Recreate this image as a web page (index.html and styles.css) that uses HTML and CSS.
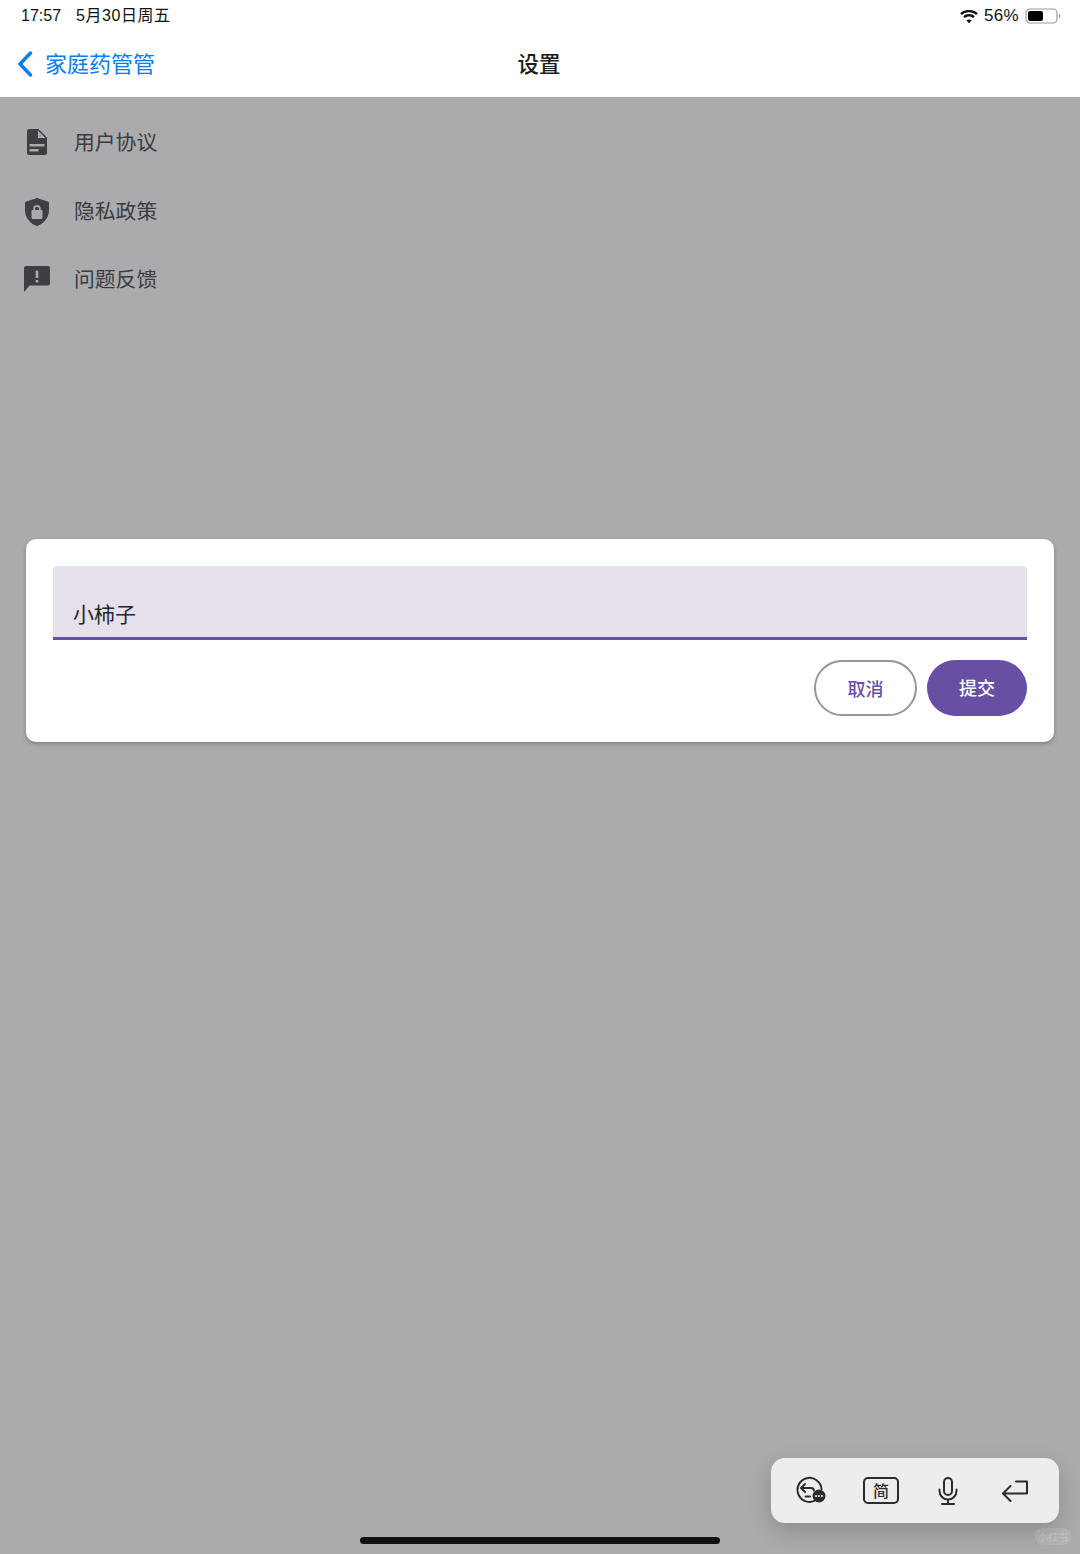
FILE: index.html
```html
<!DOCTYPE html>
<html lang="zh">
<head>
<meta charset="utf-8">
<title>设置</title>
<link rel="stylesheet" href="styles.css">
</head>
<body>
<div class="app">
  <header class="top">
    <div class="status">
      <div class="status-left"><span>17:57</span><span class="date">5月30日周五</span></div>
      <div class="status-right">
        <svg class="wifi" width="18" height="13" viewBox="0 0 18 13"><path d="M9 2.300c2.700 0 5.200 1 7.100 2.800l1.700-1.800C15.500 1.100 12.400-.1 9-.1S2.500 1.100.2 3.300l1.700 1.800C3.800 3.300 6.300 2.300 9 2.300zM9 6.400c1.600 0 3 .6 4.100 1.600l1.700-1.700C13.300 4.800 11.200 4 9 4s-4.300.8-5.800 2.300L4.900 8C6 7 7.400 6.400 9 6.400zM9 9.500c-1 0-1.900.4-2.600 1.100L9 13.200l2.600-2.600c-.7-.7-1.600-1.100-2.600-1.100z" fill="#111"/></svg>
        <span class="pct">56%</span>
        <svg class="battery" width="36" height="16" viewBox="0 0 36 16"><rect x="1" y="1" width="31" height="14" rx="4" fill="none" stroke="#9a9a9a" stroke-width="1.200"/><rect x="3" y="3" width="15" height="10" rx="2" fill="#000"/><path d="M34 6v4c1-.3 1.500-1.100 1.500-2S35 6.300 34 6z" fill="#9a9a9a"/></svg>
      </div>
    </div>
    <nav class="nav">
      <div class="back">
        <svg width="16" height="26" viewBox="0 0 16 26"><path d="M13.500 2 3 13l10.500 11" fill="none" stroke="#0a7cf0" stroke-width="3.400" stroke-linecap="round" stroke-linejoin="round"/></svg>
        <span class="lift">家庭药管管</span>
      </div>
      <h1 class="lift">设置</h1>
    </nav>
  </header>

  <main class="list">
    <div class="row">
      <svg class="icon" width="30" height="30" viewBox="0 0 30 30"><path d="M7 1h9.500L25 9.500V25a2 2 0 0 1-2 2H7a2 2 0 0 1-2-2V3a2 2 0 0 1 2-2z M16 2.500V10h7.500z M7.500 16v2.500h15V16z M7.500 21v2.500h9V21z" fill="#3e3e43" fill-rule="evenodd"/></svg>
      <span class="lift">用户协议</span>
    </div>
    <div class="row">
      <svg class="icon" width="30" height="30" viewBox="0 0 30 30"><path d="M15 1 3 5v8.500C3 20.500 8.200 26.800 15 29c6.800-2.200 12-8.500 12-15.500V5zM19.500 22h-9a1 1 0 0 1-1-1v-7a1 1 0 0 1 1-1h.8v-1.300a3.700 3.700 0 0 1 7.400 0V13h.8a1 1 0 0 1 1 1v7a1 1 0 0 1-1 1zM13 13h4v-1.300a2 2 0 0 0-4 0z" fill="#3e3e43" fill-rule="evenodd"/></svg>
      <span class="lift">隐私政策</span>
    </div>
    <div class="row">
      <svg class="icon" width="30" height="30" viewBox="0 0 30 30"><path d="M4 1h22a2 2 0 0 1 2 2v15.500a2 2 0 0 1-2 2H7.500L2 27V3a2 2 0 0 1 2-2zM13.700 5.500V13h2.600V5.500zM13.700 15v2.600h2.600V15z" fill="#3e3e43" fill-rule="evenodd"/></svg>
      <span class="lift">问题反馈</span>
    </div>
  </main>

  <section class="dialog">
    <div class="field"><span>小柿子</span></div>
    <div class="actions">
      <button class="btn btn-outline">取消</button>
      <button class="btn btn-solid">提交</button>
    </div>
  </section>

  <div class="kb">
    <svg width="34" height="32" viewBox="0 0 34 32"><g fill="none" stroke="#2b2b2b" stroke-width="2" stroke-linecap="round" stroke-linejoin="round"><path d="M22 25a12 12 0 1 1 5.500-11"/><path d="M11 9 7 13l4 4M7.500 13H17a3 3 0 0 1 3 2.500M11.500 21.500H16"/></g><circle cx="25" cy="21" r="6.500" fill="#2b2b2b"/><g fill="#eee"><circle cx="22" cy="21" r="1.100"/><circle cx="25" cy="21" r="1.100"/><circle cx="28" cy="21" r="1.100"/></g></svg>
    <div class="jian">简</div>
    <svg width="22" height="28" viewBox="0 0 22 28"><g fill="none" stroke="#2b2b2b" stroke-width="2" stroke-linecap="round"><rect x="7" y="1" width="8" height="17" rx="4"/><path d="M2.500 12.500v1.500a8.500 8.500 0 0 0 17 0v-1.500M11 22.500V27M5 27h12"/></g></svg>
    <svg width="28" height="24" viewBox="0 0 28 24"><path d="M15 2.500h11v12H2.500M9.500 7 2 14.500 9.500 22" fill="none" stroke="#2b2b2b" stroke-width="2" stroke-linecap="round" stroke-linejoin="round"/></svg>
  </div>
  <div class="home"></div>
  <div class="mark">小红书</div>
</div>
</body>
</html>
```

FILE: styles.css
```css
* { box-sizing: border-box; }
html, body { margin: 0; padding: 0; }
body {
  width: 1080px;
  height: 1554px;
  overflow: hidden;
  font-family: "Noto Sans CJK SC", "Noto Sans", sans-serif;
}
.app {
  position: relative;
  width: 1080px;
  height: 1554px;
  background: #ababad;
  display: flex;
  flex-direction: column;
}
.top {
  height: 97px;
  background: #fff;
  display: flex;
  flex-direction: column;
}
.status {
  height: 32px;
  padding: 0 19px 0 21px;
  display: flex;
  justify-content: space-between;
  align-items: center;
  font-family: "Liberation Sans", "Noto Sans CJK SC", sans-serif;
  font-size: 16px;
  line-height: 20px;
  color: #111;
}
.status-left { display: flex; align-items: baseline; gap: 15px; }
.date { letter-spacing: .55px; }
.status-right { display: flex; align-items: center; gap: 6px; }
.pct { font-size: 17px; letter-spacing: .3px; }
.nav {
  flex: 1;
  display: grid;
  grid-template-columns: 1fr auto 1fr;
  align-items: center;
  padding-bottom: 1px;
}
.lift { padding-bottom: 4px; }
.back {
  margin-left: 17px;
  display: flex;
  align-items: center;
  gap: 12px;
  color: #0a7cf0;
  font-size: 22px;
}
.nav h1 {
  margin: 0 2px 0 0;
  font-size: 21.500px;
  font-weight: 500;
  color: #1c1c1c;
}
.list {
  padding: 12px 0 0 22px;
  display: flex;
  flex-direction: column;
}
.row {
  height: 68.500px;
  display: flex;
  align-items: center;
  gap: 22px;
  font-size: 20.800px;
  color: #3c3c40;
}
.icon { flex: none; }
.dialog {
  position: absolute;
  left: 26px;
  top: 539px;
  width: 1028px;
  height: 203px;
  background: #fff;
  border-radius: 10px;
  padding: 27px 27px 26px;
  box-shadow: 0 2px 4px rgba(0, 0, 0, .25);
  display: flex;
  flex-direction: column;
  gap: 20px;
}
.field {
  height: 74px;
  flex: none;
  background: #e6e0ea;
  border-radius: 4px 4px 0 0;
  border-bottom: 3px solid #6750a4;
  padding: 29px 0 0 20px;
  font-size: 21px;
  line-height: 36px;
  color: #26232b;
}
.actions {
  display: flex;
  justify-content: flex-end;
  gap: 10px;
}
.btn {
  height: 56px;
  border-radius: 28px;
  font-family: inherit;
  font-size: 18px;
  font-weight: 500;
  padding: 0;
}
.btn-outline {
  width: 103px;
  background: #fff;
  border: 2px solid #97949c;
  color: #6750a4;
}
.btn-solid {
  width: 100px;
  background: #6750a4;
  border: 0;
  color: #fff;
  padding-bottom: 2px;
}
.kb {
  position: absolute;
  left: 771px;
  top: 1458px;
  width: 288px;
  height: 65px;
  background: #ededee;
  border-radius: 14px;
  box-shadow: 0 8px 22px rgba(0, 0, 0, .18);
  padding-left: 4px;
  display: grid;
  grid-template-columns: 72px 68px 66px 68px;
  align-items: center;
  justify-items: center;
}
.jian {
  width: 36px;
  height: 27px;
  border: 2px solid #2b2b2b;
  border-radius: 5px;
  font-size: 16px;
  font-weight: 500;
  line-height: 22px;
  text-align: center;
  color: #2b2b2b;
}
.home {
  position: absolute;
  left: 360px;
  top: 1537px;
  width: 360px;
  height: 7px;
  border-radius: 4px;
  background: #111;
}
.mark {
  position: absolute;
  left: 1035px;
  top: 1528px;
  width: 36px;
  height: 17px;
  border-radius: 8px;
  background: rgba(255, 255, 255, .1);
  color: rgba(255, 255, 255, .22);
  font-size: 10px;
  line-height: 17px;
  text-align: center;
}
```
